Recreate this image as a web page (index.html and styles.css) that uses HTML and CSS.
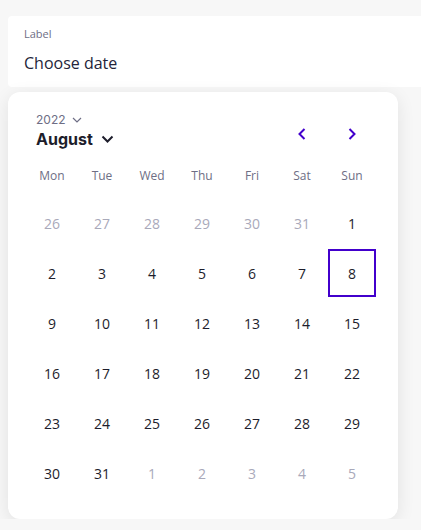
FILE: index.html
```html
<!DOCTYPE html>
<html lang="en">
<head>
  <meta charset="UTF-8" />
  <title>Date picker</title>
  <link rel="stylesheet" href="styles.css">
</head>
<body>
  <div class="field">
    <div class="field-label">Label</div>
    <div class="field-value">Choose date</div>
  </div>

  <div class="calendar">
    <div class="cal-head">
      <div class="cal-title">
        <div class="year">2022
          <svg width="10" height="6" viewBox="0 0 10 6"><path d="M1 1l4 4 4-4" fill="none" stroke="#6e6e85" stroke-width="1.2"/></svg>
        </div>
        <div class="month">August
          <svg width="13" height="8" viewBox="0 0 13 8"><path d="M1.5 1.5l5 5 5-5" fill="none" stroke="#1d1d2b" stroke-width="2"/></svg>
        </div>
      </div>
      <div class="nav">
        <button class="nav-btn"><svg width="8" height="12" viewBox="0 0 8 12"><path d="M6.5 1l-5 5 5 5" fill="none" stroke="#4200cc" stroke-width="2"/></svg></button>
        <button class="nav-btn"><svg width="8" height="12" viewBox="0 0 8 12"><path d="M1.5 1l5 5-5 5" fill="none" stroke="#4200cc" stroke-width="2"/></svg></button>
      </div>
    </div>

    <div class="grid">
      <div class="wd">Mon</div><div class="wd">Tue</div><div class="wd">Wed</div><div class="wd">Thu</div><div class="wd">Fri</div><div class="wd">Sat</div><div class="wd">Sun</div>

      <div class="day muted">26</div><div class="day muted">27</div><div class="day muted">28</div><div class="day muted">29</div><div class="day muted">30</div><div class="day muted">31</div><div class="day">1</div>
      <div class="day">2</div><div class="day">3</div><div class="day">4</div><div class="day">5</div><div class="day">6</div><div class="day">7</div><div class="day selected">8</div>
      <div class="day">9</div><div class="day">10</div><div class="day">11</div><div class="day">12</div><div class="day">13</div><div class="day">14</div><div class="day">15</div>
      <div class="day">16</div><div class="day">17</div><div class="day">18</div><div class="day">19</div><div class="day">20</div><div class="day">21</div><div class="day">22</div>
      <div class="day">23</div><div class="day">24</div><div class="day">25</div><div class="day">26</div><div class="day">27</div><div class="day">28</div><div class="day">29</div>
      <div class="day">30</div><div class="day">31</div><div class="day muted">1</div><div class="day muted">2</div><div class="day muted">3</div><div class="day muted">4</div><div class="day muted">5</div>
    </div>
  </div>
</body>
</html>
```

FILE: styles.css
```css
html {
  overflow: hidden;
}

body {
  margin: 0;
  padding: 16px 0 0 8px;
  background: #f7f7f7;
  font-family: "Open Sans", "Noto Sans", sans-serif;
  color: #1d1d2b;
}

/* 入力欄（右端は画面外まで続く） */
.field {
  width: 413px;
  height: 71px;
  box-sizing: border-box;
  background: #fff;
  border-radius: 4px 0 0 4px;
  padding: 10px 16px 0;
}
.field-label {
  font-size: 11px;
  color: #6e6e85;
  line-height: 16px;
}
.field-value {
  font-size: 16px;
  line-height: 22px;
  margin-top: 10px;
  color: #24243a;
}

/* カレンダー */
.calendar {
  width: 390px;
  margin-top: 5px;
  box-sizing: border-box;
  background: #fff;
  border-radius: 12px;
  box-shadow: 0 4px 18px rgba(0, 0, 0, 0.09);
  padding: 18px 21px 21px 19px;
}

.cal-head {
  display: flex;
  justify-content: space-between;
  align-items: center;
  padding-left: 9px;
  height: 42px;
}
.year {
  font-family: Inter, sans-serif;
  font-size: 12px;
  color: #6e6e85;
  line-height: 16px;
  display: flex;
  align-items: center;
  gap: 6px;
}
.month {
  font-family: Inter, sans-serif;
  font-size: 16px;
  font-weight: 700;
  line-height: 22px;
  display: flex;
  align-items: center;
  gap: 8px;
}
.nav {
  display: flex;
  margin-top: 5px;
}
.nav-btn {
  width: 50px;
  height: 30px;
  border: none;
  background: none;
  padding: 0;
  display: flex;
  justify-content: center;
  align-items: center;
  cursor: pointer;
}

.grid {
  display: grid;
  grid-template-columns: repeat(7, 50px);
  grid-template-rows: 46px repeat(6, 50px);
}
.wd {
  display: flex;
  justify-content: center;
  align-items: center;
  font-size: 12px;
  color: #6e6e85;
}
.day {
  display: flex;
  justify-content: center;
  align-items: center;
  font-size: 14px;
  color: #1d1d2b;
  box-sizing: border-box;
  margin: 1px;
}
.day.muted {
  color: #a9a9ba;
}
.day.selected {
  border: 2px solid #4200cc;
}
```
